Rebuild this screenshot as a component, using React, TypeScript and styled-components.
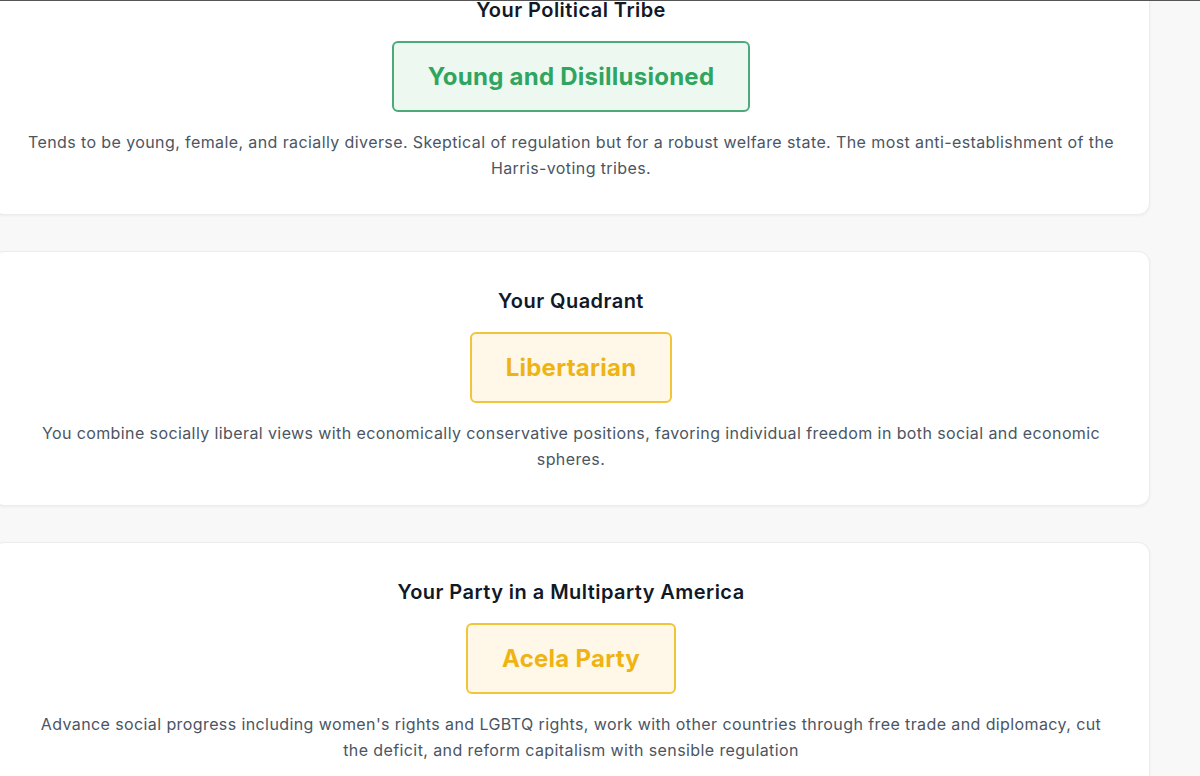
import React from "react";
import styled, { createGlobalStyle } from "styled-components";

type Tone = "green" | "yellow";

const tones: Record<Tone, { fg: string; border: string; bg: string }> = {
  green: { fg: "#2fa55f", border: "#4caa78", bg: "#edf8f1" },
  yellow: { fg: "#eeb414", border: "#f0c53a", bg: "#fff8e8" },
};

const results = [
  {
    title: "Your Political Tribe",
    label: "Young and Disillusioned",
    tone: "green" as Tone,
    text: "Tends to be young, female, and racially diverse. Skeptical of regulation but for a robust welfare state. The most anti-establishment of the Harris-voting tribes.",
  },
  {
    title: "Your Quadrant",
    label: "Libertarian",
    tone: "yellow" as Tone,
    text: "You combine socially liberal views with economically conservative positions, favoring individual freedom in both social and economic spheres.",
  },
  {
    title: "Your Party in a Multiparty America",
    label: "Acela Party",
    tone: "yellow" as Tone,
    text: "Advance social progress including women's rights and LGBTQ rights, work with other countries through free trade and diplomacy, cut the deficit, and reform capitalism with sensible regulation",
  },
];

const GlobalStyle = createGlobalStyle`
  html, body {
    margin: 0;
    padding: 0;
    background: #f8f8f8;
    overflow: hidden;
  }
  body {
    font-family: Inter, "Noto Sans", "Liberation Sans", sans-serif;
    border-top: 1px solid #555;
  }
  * { box-sizing: border-box; }
`;

const Page = styled.main`
  width: 1158px;
  margin: -41px 0 0 -8px;
  display: flex;
  flex-direction: column;
  gap: 36px;
`;

const Card = styled.section`
  background: #fff;
  border: 1px solid #ececec;
  border-radius: 12px;
  box-shadow: 0 1px 3px rgba(0, 0, 0, 0.05);
  padding: 34px 34px 33px;
  display: flex;
  flex-direction: column;
  align-items: center;
  text-align: center;
`;

const Title = styled.h2`
  margin: 0 0 16px;
  font-size: 20px;
  line-height: 30px;
  font-weight: 600;
  letter-spacing: 0.45px;
  color: #111827;
`;

const Badge = styled.div<{ $tone: Tone }>`
  padding: 18px 34px;
  border: 2px solid ${(p) => tones[p.$tone].border};
  background: ${(p) => tones[p.$tone].bg};
  border-radius: 6px;
  color: ${(p) => tones[p.$tone].fg};
  font-size: 24px;
  line-height: 31px;
  font-weight: 700;
  letter-spacing: 0.25px;
  margin-bottom: 17px;
`;

const Text = styled.p`
  margin: 0;
  font-size: 16px;
  line-height: 26px;
  letter-spacing: 0.4px;
  color: #4b5563;
`;

export default function App() {
  return (
    <>
      <GlobalStyle />
      <Page>
        {results.map((r) => (
          <Card key={r.title}>
            <Title>{r.title}</Title>
            <Badge $tone={r.tone}>{r.label}</Badge>
            <Text>{r.text}</Text>
          </Card>
        ))}
      </Page>
    </>
  );
}
